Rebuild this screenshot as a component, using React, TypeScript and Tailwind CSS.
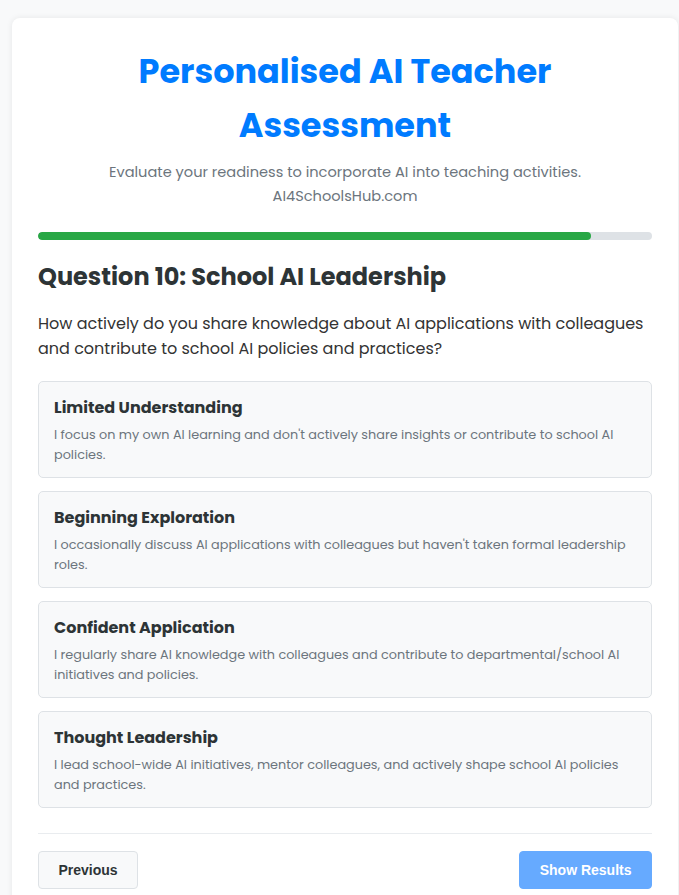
const options = [
  {
    title: "Limited Understanding",
    text: "I focus on my own AI learning and don't actively share insights or contribute to school AI policies.",
  },
  {
    title: "Beginning Exploration",
    text: "I occasionally discuss AI applications with colleagues but haven't taken formal leadership roles.",
  },
  {
    title: "Confident Application",
    text: "I regularly share AI knowledge with colleagues and contribute to departmental/school AI initiatives and policies.",
  },
  {
    title: "Thought Leadership",
    text: "I lead school-wide AI initiatives, mentor colleagues, and actively shape school AI policies and practices.",
  },
];

export default function App() {
  return (
    <div className="min-h-screen bg-[#f8f9fa] pt-[18px] pl-[12px] font-['Poppins','Open_Sans',sans-serif]">
      <div className="w-[666px] rounded-lg bg-white px-[26px] pt-[27px] pb-10 shadow-[0_0_6px_rgba(0,0,0,0.08)]">
        <h1 className="text-center text-[33.5px] leading-[54px] font-bold text-[#007bff]">
          Personalised AI Teacher
          <br />
          Assessment
        </h1>
        <p className="mt-[7px] text-center text-[14.6px] leading-6 text-[#6c757d]">
          Evaluate your readiness to incorporate AI into teaching activities.
          <br />
          AI4SchoolsHub.com
        </p>

        <div className="mt-6 h-2 w-full overflow-hidden rounded-full bg-[#dee2e6]">
          <div className="h-full w-[90%] rounded-full bg-[#28a745]" />
        </div>

        <h2 className="mt-[21px] text-[24px] leading-[31px] font-bold text-[#2d3436]">
          Question 10: School AI Leadership
        </h2>
        <p className="mt-[19px] text-[16px] leading-[25px] text-[#333]">
          How actively do you share knowledge about AI applications with colleagues
          and contribute to school AI policies and practices?
        </p>

        <div className="mt-5 flex flex-col gap-[13px]">
          {options.map((option) => (
            <div
              key={option.title}
              className="rounded-[5px] border border-[#dee2e6] bg-[#f8f9fa] px-[15px] pt-[15px] pb-[12px]"
            >
              <h3 className="mb-[6px] text-[16px] leading-[22px] font-bold text-[#2d3436]">
                {option.title}
              </h3>
              <p className="text-[12.8px] leading-5 text-[#6c757d]">{option.text}</p>
            </div>
          ))}
        </div>

        <div className="mt-[25px] flex items-center justify-between border-t border-[#e9ecef] pt-[17px] font-['Liberation_Sans',Arial,sans-serif]">
          <button className="h-[38px] rounded-[4px] border border-[#dee2e6] bg-[#f8f9fa] px-[19.5px] text-[14px] font-bold text-[#2d3436]">
            Previous
          </button>
          <button className="h-[38px] rounded-[4px] border border-[#66aaff] bg-[#66aaff] px-[19.5px] text-[14px] font-bold text-white">
            Show Results
          </button>
        </div>
      </div>
    </div>
  );
}
